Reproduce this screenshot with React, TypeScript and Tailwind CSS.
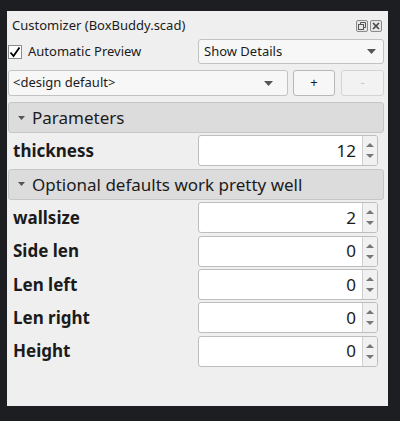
import React from "react";

type Param = { name: string; value: number };

const groups: { title: string; params: Param[] }[] = [
  { title: "Parameters", params: [{ name: "thickness", value: 12 }] },
  {
    title: "Optional defaults work pretty well",
    params: [
      { name: "wallsize", value: 2 },
      { name: "Side len", value: 0 },
      { name: "Len left", value: 0 },
      { name: "Len right", value: 0 },
      { name: "Height", value: 0 },
    ],
  },
];

function DownArrow({ className = "", w = 9, h = 5 }: { className?: string; w?: number; h?: number }) {
  return (
    <svg width={w} height={h} viewBox={`0 0 ${w} ${h}`} className={className}>
      <path d={`M0 0 L${w} 0 L${w / 2} ${h} Z`} fill="currentColor" />
    </svg>
  );
}

function DockButtons() {
  return (
    <div className="flex gap-[2px]">
      <svg width="12" height="12" viewBox="0 0 12 12">
        <rect x="0.5" y="0.5" width="11" height="11" rx="1.5" fill="#e6e6e6" stroke="#8a8a8a" />
        <rect x="2.5" y="4.5" width="5" height="5" fill="none" stroke="#555" />
        <path d="M4.5 4.5 V2.5 H9.5 V7.5 H7.5" fill="none" stroke="#555" />
      </svg>
      <svg width="12" height="12" viewBox="0 0 12 12">
        <rect x="0.5" y="0.5" width="11" height="11" rx="1.5" fill="#e6e6e6" stroke="#8a8a8a" />
        <path d="M3 3 L9 9 M9 3 L3 9" stroke="#444" strokeWidth="1.6" />
      </svg>
    </div>
  );
}

function SpinBox({ value }: { value: number }) {
  return (
    <div className="flex h-[31px] w-[180px] overflow-hidden rounded-[3px] border border-[#bdbdbd] bg-white">
      <div className="flex flex-1 items-center justify-end pr-[6px] text-[17px] text-[#1a1a1a]">
        {value}
      </div>
      <div className="flex w-[15px] flex-col items-center justify-center gap-[7px] border-l border-[#d0d0d0] bg-[#f1f1f1] text-[#777]">
        <DownArrow className="rotate-180" w={8} h={4} />
        <DownArrow w={8} h={4} />
      </div>
    </div>
  );
}

export default function App() {
  return (
    <div
      className="h-[421px] w-[400px] bg-[#1d1e22] pl-[7px] pt-[11px]"
      style={{ fontFamily: '"Noto Sans", "Open Sans", sans-serif' }}
    >
      <div className="flex h-[395px] w-[381px] flex-col bg-[#efefef] pl-[1px] pr-[4px] text-[#1b1b1b]">
        <div className="flex h-[26px] items-center justify-between pl-[4px] pr-[2px] pt-[3px]">
          <span className="text-[13px]">Customizer (BoxBuddy.scad)</span>
          <DockButtons />
        </div>

        <div className="mt-[2px] flex h-[25px] items-center">
          <label className="flex w-[190px] items-center gap-[6px]">
            <span className="flex h-[14px] w-[14px] items-center justify-center border border-[#8c8c8c] bg-white">
              <svg width="12" height="12" viewBox="0 0 12 12">
                <path d="M1.5 6.5 L4.5 10 L10.5 1.5" fill="none" stroke="#000" strokeWidth="1.8" />
              </svg>
            </span>
            <span className="text-[13px]">Automatic Preview</span>
          </label>
          <div className="flex h-[25px] flex-1 items-center justify-between rounded-[3px] border border-[#c2c2c2] bg-[#f7f7f7] pl-[5px] pr-[7px] text-[13px]">
            <span>Show Details</span>
            <DownArrow className="text-[#555]" />
          </div>
        </div>

        <div className="mt-[6px] flex h-[26px] gap-[5px]">
          <div className="flex w-[280px] items-center justify-between rounded-[3px] border border-[#c2c2c2] bg-[#f7f7f7] pl-[4px] pr-[14px] text-[13px]">
            <span>&lt;design default&gt;</span>
            <DownArrow className="text-[#555]" />
          </div>
          <button className="flex w-[42px] items-center justify-center rounded-[3px] border border-[#b8b8b8] bg-[#f7f7f7] text-[13px]">
            +
          </button>
          <button
            disabled
            className="ml-[1px] flex flex-1 items-center justify-center rounded-[3px] border border-[#d4d4d4] bg-[#f2f2f2] text-[13px] text-[#c4c4c4]"
          >
            -
          </button>
        </div>

        <div className="mt-[6px] flex flex-col gap-[2.4px]">
          {groups.map((g) => (
            <React.Fragment key={g.title}>
              <div className="flex h-[31px] items-center gap-[7px] rounded-[3px] border border-[#c6c6c6] bg-[#dcdcdc] pl-[9px]">
                <DownArrow className="text-[#555]" w={7} h={4} />
                <span className="text-[17px]">{g.title}</span>
              </div>
              {g.params.map((p) => (
                <div key={p.name} className="flex h-[31px] items-center pr-[5px]">
                  <span className="w-[190px] pl-[5px] text-[17px] font-bold">{p.name}</span>
                  <SpinBox value={p.value} />
                </div>
              ))}
            </React.Fragment>
          ))}
        </div>
      </div>
    </div>
  );
}
